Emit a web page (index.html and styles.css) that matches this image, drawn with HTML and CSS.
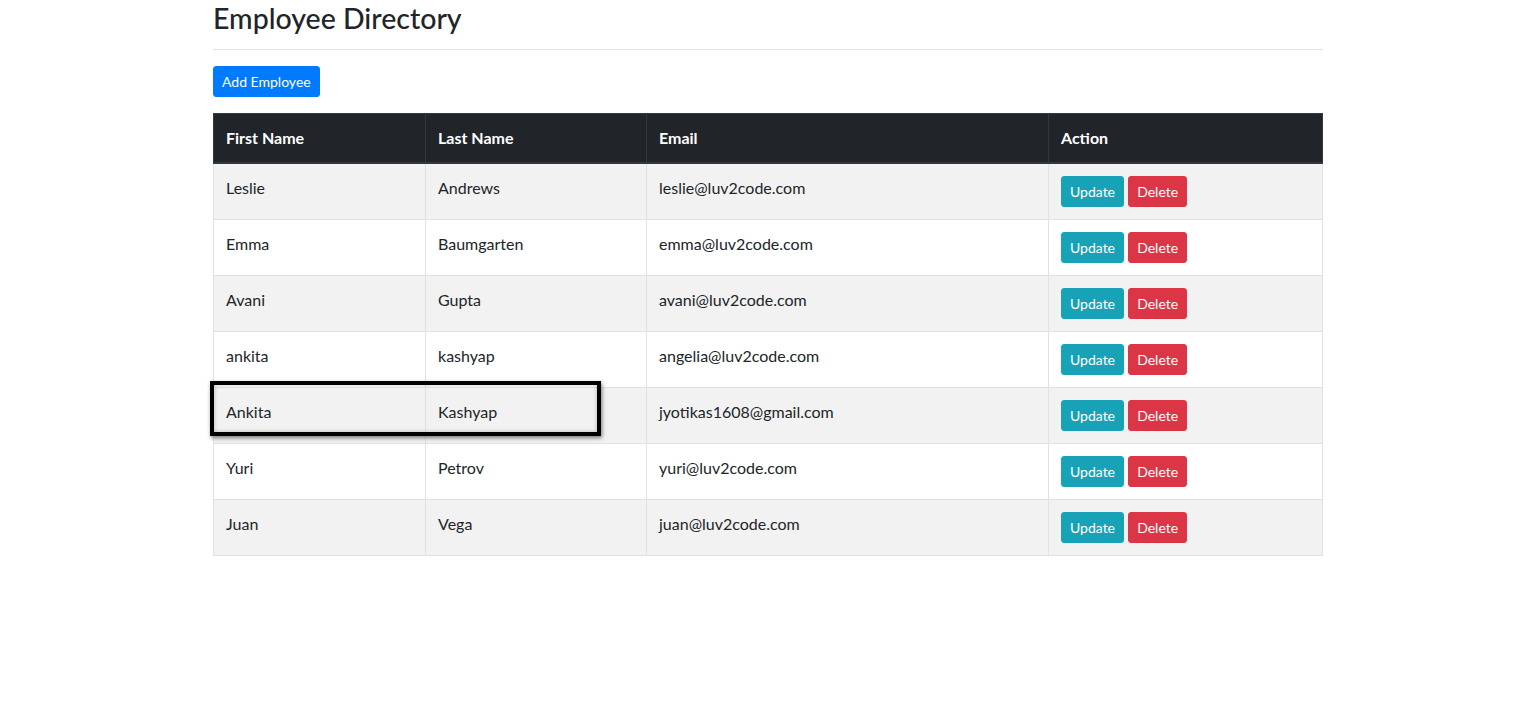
FILE: index.html
```html
<!DOCTYPE html>
<html lang="en">
<head>
<meta charset="utf-8">
<title>Employee Directory</title>
<link rel="stylesheet" href="styles.css">
</head>
<body>
<div class="container">
  <h3 class="title">Employee Directory</h3>
  <hr class="rule">
  <button class="btn btn-primary add-btn">Add Employee</button>
  <div class="table-wrap">
    <table class="table">
      <colgroup>
        <col class="c1"><col class="c2"><col class="c3"><col class="c4">
      </colgroup>
      <thead>
        <tr><th>First Name</th><th>Last Name</th><th>Email</th><th>Action</th></tr>
      </thead>
      <tbody>
        <tr><td>Leslie</td><td>Andrews</td><td>leslie@luv2code.com</td><td><button class="btn btn-info">Update</button> <button class="btn btn-danger">Delete</button></td></tr>
        <tr><td>Emma</td><td>Baumgarten</td><td>emma@luv2code.com</td><td><button class="btn btn-info">Update</button> <button class="btn btn-danger">Delete</button></td></tr>
        <tr><td>Avani</td><td>Gupta</td><td>avani@luv2code.com</td><td><button class="btn btn-info">Update</button> <button class="btn btn-danger">Delete</button></td></tr>
        <tr><td>ankita</td><td>kashyap</td><td>angelia@luv2code.com</td><td><button class="btn btn-info">Update</button> <button class="btn btn-danger">Delete</button></td></tr>
        <tr><td>Ankita</td><td>Kashyap</td><td>jyotikas1608@gmail.com</td><td><button class="btn btn-info">Update</button> <button class="btn btn-danger">Delete</button></td></tr>
        <tr><td>Yuri</td><td>Petrov</td><td>yuri@luv2code.com</td><td><button class="btn btn-info">Update</button> <button class="btn btn-danger">Delete</button></td></tr>
        <tr><td>Juan</td><td>Vega</td><td>juan@luv2code.com</td><td><button class="btn btn-info">Update</button> <button class="btn btn-danger">Delete</button></td></tr>
      </tbody>
    </table>
    <div class="highlight"></div>
  </div>
</div>
</body>
</html>
```
FILE: styles.css
```css
* { box-sizing: border-box; }
body {
  margin: 0;
  font-family: Lato, "Liberation Sans", sans-serif;
  font-size: 16px;
  line-height: 1.5;
  color: #212529;
  background: #fff;
}
.container {
  width: 1110px;
  margin: 0 auto;
}
.title {
  margin: 0;
  padding-top: 1px;
  font-size: 28.5px;
  font-weight: 500;
  line-height: 34px;
  color: #212529;
}
.rule {
  margin: 14px 0 16px;
  border: 0;
  border-top: 1px solid rgba(0,0,0,.1);
}
.btn {
  display: inline-block;
  font-family: inherit;
  font-size: 14px;
  line-height: 21px;
  padding: 4px 8px;
  border: 1px solid transparent;
  border-radius: 3px;
  color: #fff;
  cursor: pointer;
}
.btn-primary { background: #007bff; border-color: #007bff; }
.btn-info { background: #17a2b8; border-color: #17a2b8; }
.btn-danger { background: #dc3545; border-color: #dc3545; }
.add-btn { margin-bottom: 16px; }
.table-wrap { position: relative; }
.table {
  width: 1109px;
  border-collapse: collapse;
  table-layout: fixed;
}
.c1 { width: 212px; }
.c2 { width: 221px; }
.c3 { width: 402px; }
.c4 { width: 274px; }
.table th, .table td {
  padding: 12px;
  vertical-align: top;
  text-align: left;
  border: 1px solid #dee2e6;
}
.table thead th {
  background: #212529;
  color: #fff;
  font-weight: 700;
  border-color: #32383e;
  border-bottom-width: 2px;
  padding-bottom: 12px;
}
.table tbody tr:nth-child(odd) { background: #f2f2f2; }
.table tbody td { color: #212529; }
.highlight {
  position: absolute;
  left: -3px;
  top: 268px;
  width: 391px;
  height: 55px;
  border: 4px solid #000;
  box-shadow: 1px 2px 4px rgba(0,0,0,.5), inset 0 0 4px rgba(0,0,0,.25);
  pointer-events: none;
}
```
